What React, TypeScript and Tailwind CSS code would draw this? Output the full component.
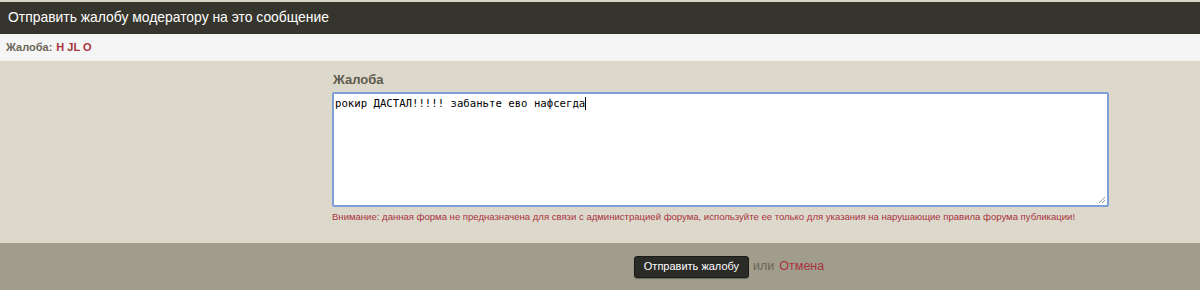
import React from "react";

export default function App() {
  return (
    <div className="w-[1200px] h-[290px] overflow-hidden bg-[#dcd9cc] flex flex-col" style={{ fontFamily: '"Liberation Sans", Arial, sans-serif' }}>
      <div className="h-[2px] bg-[#d9d6c8]" />
      <div className="h-[32px] bg-[#35352d] flex items-center px-[8px]">
        <h1 className="text-[13.9px] text-white font-normal leading-none">Отправить жалобу модератору на это сообщение</h1>
      </div>
      <div className="h-[27px] bg-[#f5f5f5] flex items-center px-[6px] text-[11px] font-bold">
        <span className="text-[#6b6658]">Жалоба:</span>
        <span className="text-[#a8333d] ml-[4px]">H JL O</span>
      </div>
      <div className="flex-1 flex pt-[12px]">
        <div className="w-[332px] shrink-0" />
        <div className="flex flex-col">
          <label className="text-[13px] font-bold text-[#5e5a4d] leading-none ml-[1px]">Жалоба</label>
          <div className="mt-[6px] w-[777px] h-[115px] bg-white border-2 border-[#7e9fd8] rounded-[2px] px-[1px] py-[3px] relative">
            <div className="text-[10.67px] text-black leading-[13px] flex items-center" style={{ fontFamily: '"DejaVu Sans Mono", monospace' }}>
              <span>рокир ДАСТАЛ!!!!! забаньте ево нафсегда</span>
              <span className="inline-block w-[1px] h-[13px] bg-black" />
            </div>
            <svg className="absolute right-[1px] bottom-[1px]" width="8" height="8" viewBox="0 0 8 8">
              <path d="M7 1 L1 7 M7 4 L4 7" stroke="#9a9a9a" strokeWidth="1" />
            </svg>
          </div>
          <p className="mt-[4px] text-[9.55px] text-[#a8333d] leading-[12px]">
            Внимание: данная форма не предназначена для связи с администрацией форума, используйте ее только для указания на нарушающие правила форума публикации!
          </p>
        </div>
      </div>
      <div className="h-[47px] bg-[#a09d8c] flex items-center justify-center pl-[258px] text-[12.5px]">
        <button className="h-[22px] px-[9px] bg-[#2a2a27] text-white rounded-[3px] border border-[#1a1a18] shadow-[0_1px_1px_rgba(0,0,0,0.3)] text-[11px] leading-none">
          Отправить жалобу
        </button>
        <span className="ml-[4px] text-[#6a6658]">или</span>
        <span className="ml-[5px] text-[#a8333d]">Отмена</span>
      </div>
    </div>
  );
}
